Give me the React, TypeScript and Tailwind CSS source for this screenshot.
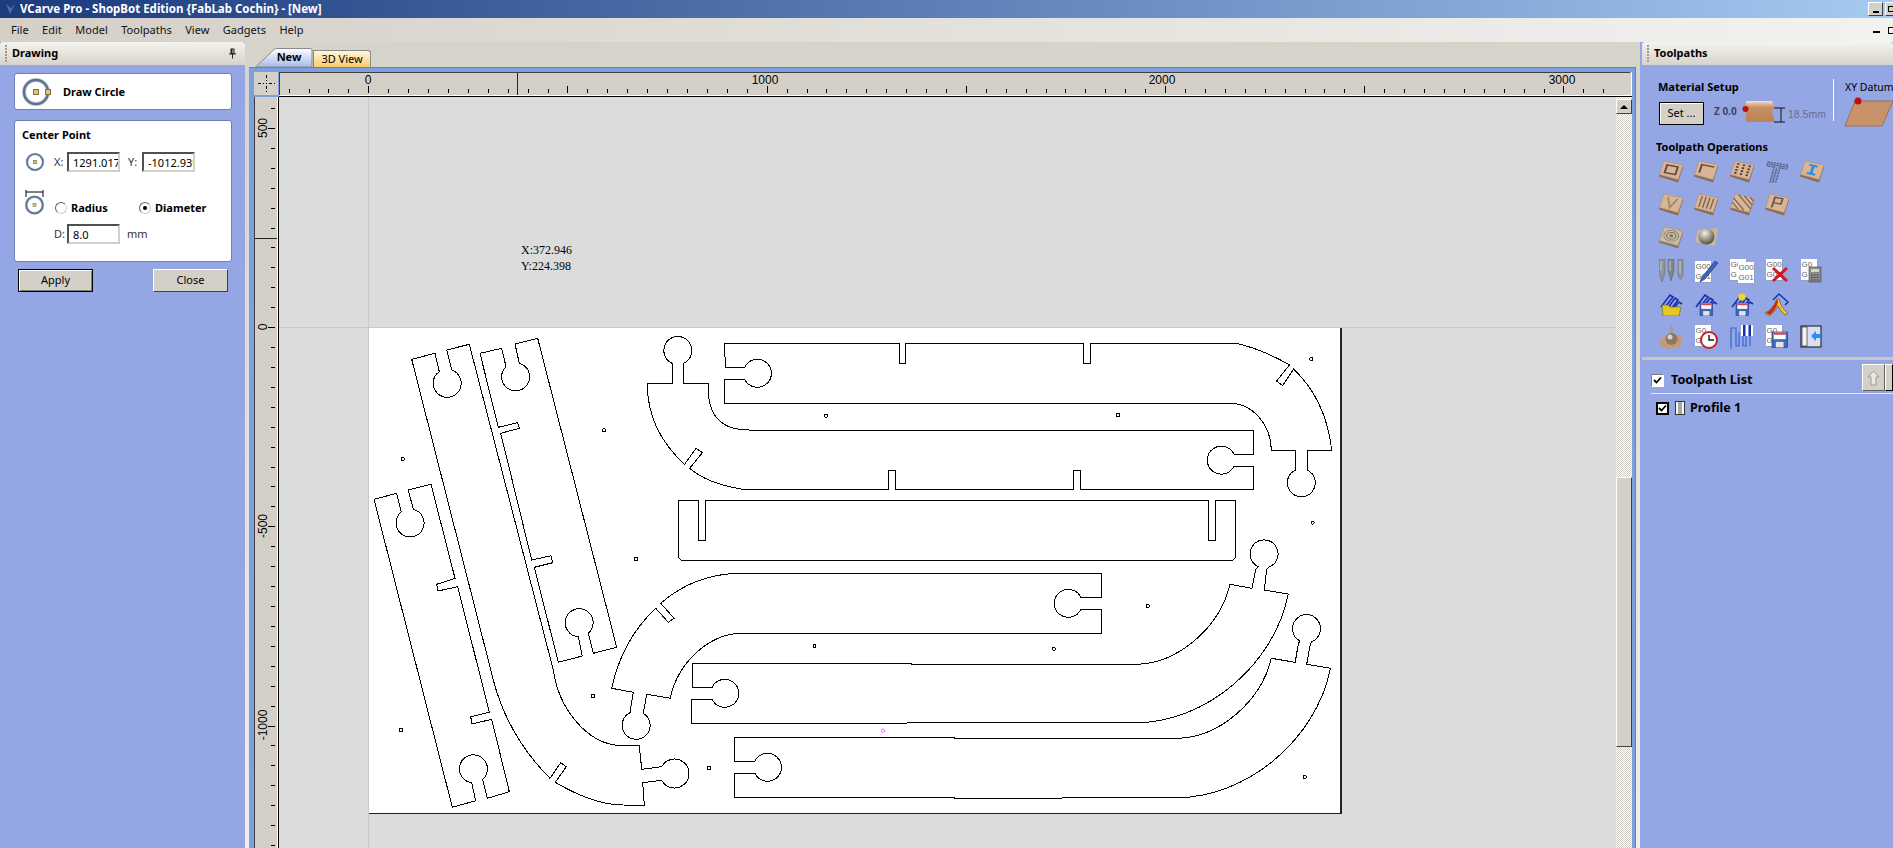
import type { ReactNode } from 'react';

const menus = ['File', 'Edit', 'Model', 'Toolpaths', 'View', 'Gadgets', 'Help'];

// sheet outlines, in screen pixels
const parts = [
  // long strap with the curved end
  'M411.7 359.3L435 353.3L439.3 371.7A14 14 0 1 0 451.7 370L446.7 350L469.3 344.3L553.3 670C558 705 585 745.7 623.3 745.7L639.3 745.7L641.7 769.3L661.7 766.7A14.5 14.5 0 1 1 661.7 780.3L642.7 782.7L644.3 805.3L623.3 805Q593.8 805 555.3 782.3L566.3 766.7L560.7 762.7L550 778.3Q507.8 736 493.3 680L411.7 359.3Z',
  // middle strap
  'M480 353.3L501.7 348.3L506 366.7A14 14 0 1 0 519.3 363.3L515 344L537.7 338.3L616.7 647.3L593.3 653.3L588.3 633.3A14 14 0 1 0 578.3 636.7L582.3 656L558.3 662.3L534.3 567.3L552.7 562.7L551 555.7L531.7 560L500.7 433.3L519.3 428.3L517.7 422.7L498.3 427.3Z',
  // short strap
  'M374 499.3L396.7 493.3L401.3 512A14 14 0 1 0 413.3 509.3L408.3 490L431 484.3L455 578.3L436.7 584.3L438 591L457.7 586.7L489.3 712.3L470.7 716.7L472 724L491.7 719.3L509.3 791.7L487.3 798.3L482.7 779.3A14 14 0 1 0 471.7 782.7L475.7 800.7L452.3 807.3Z',
  // top J
  'M724.5 343.3L899 343.3L899 363.3L905.4 363.3L905.4 343.3L1083.5 343.3L1083.5 363.3L1090.3 363.3L1090.3 343.3L1236 343.3Q1262 349 1289.5 365L1276.6 381L1282.6 385.7L1293.6 369Q1326 400 1331.7 450L1307 450L1307 470A14 14 0 1 1 1295.6 470L1295.6 450L1271.3 450C1271 424.6 1252.5 403.3 1230 403.3L724.5 403.3L724.5 379.3L744.7 379.3A14 14 0 1 0 744.7 367.3L725.4 367.3Z',
  // second J
  'M647.3 383.3L672.1 383.3L672.1 363.3A14 14 0 1 1 683.6 363.3L683.6 383.3L708 383.3L708.9 398.3Q713 430 748.6 430L1253.9 430L1253.9 454.3L1234 454.3A14 14 0 1 0 1234 466L1253.9 466L1253.9 489.3L1080.6 489.3L1080.6 470.3L1073.6 470.3L1073.6 489.3L895.3 489.3L895.3 470.3L888.5 470.3L888.5 489.3L743 489.3Q708 484 689.6 468.3L702.4 452.7L696 448.3L684.6 464.3Q647 430 647.3 383.3Z',
  // plain bar with two slots
  'M678.6 500.3L698.3 500.3L698.3 540.3L705.7 540.3L705.7 500.3L1208.4 500.3L1208.4 540.3L1215.3 540.3L1215.3 500.3L1235.5 500.3L1235.5 557.7L1232.5 560.3L681.3 560.3L678.6 557.7Z',
  // lower J, first
  'M1101.4 573.3L1101.4 597.3L1080.9 597.3A14 14 0 1 0 1080.9 609.3L1101.4 609.3L1101.4 633.3L741.9 633.3C709.7 633.3 677.5 662.5 670.3 698.3L646.7 694.3L643.3 713.3A14 14 0 1 1 630 712.7L633.3 692.3L611.7 688.3Q622 640 655.7 608.3L668.3 622.3L674 618.3L660.7 603.3Q695 573.3 741.9 573.3Z',
  // lower J, second
  'M692.3 663.3L911.8 663.3L911.8 664.3L1135 664.3C1176.8 664.3 1219.6 628.3 1230 584.3L1252 588.3L1255.7 569.3L1258 566.500A14 14 0 1 1 1269 567L1266.7 569.3L1264.4 590L1288.3 594C1274.2 664.8 1205.6 722.7 1135.9 722.7L691.4 723.3L691.4 699.3L712.1 699.3A14 14 0 1 0 712.1 687.3L692.3 687.3Z',
  // lower J, third
  'M734.6 737.3L954.5 737.3L954.5 738.3L1176.3 738.3C1217.9 738.3 1260.8 702.3 1271.3 658.3L1295.2 662.3L1298.4 643.3L1300 641A14 14 0 1 1 1312 641.500L1310.3 644L1306.7 664.3L1330.5 668.3C1316.3 739.5 1246.9 797.7 1176.3 797.7L954.5 798.3L954.5 797.3L734.6 797.3L734.6 773.3L754.8 773.3A14 14 0 1 0 754.8 761.3L734.6 761.3Z',
];

const holes = [
  [402.7, 459], [604, 430.3], [636, 559], [401, 730], [593, 696], [709, 768], [826, 415.7], [1118, 415],
  [1311.2, 359], [1312.6, 522.7], [1147.8, 606], [814.5, 646], [1053.7, 648.7], [1304.8, 777],
];

function Grip() {
  return (
    <div className="flex flex-col gap-[1px] mr-[5px]">
      {[0, 1, 2, 3, 4, 5].map((i) => (
        <span key={i} className="w-[2px] h-[2px] bg-[#a09c92]" />
      ))}
    </div>
  );
}

function PanelHeader({ title, children }: { title: string; children?: ReactNode }) {
  return (
    <div className="h-[23px] shrink-0 flex items-center pl-[5px] pr-[8px] rounded-t-[3px] bg-gradient-to-b from-[#f4f3ef] to-[#d6d3ca]">
      <Grip />
      <span className="font-bold text-[11px] text-black">{title}</span>
      <span className="flex-1" />
      {children}
    </div>
  );
}

function Field({ value }: { value: string }) {
  return (
    <input
      readOnly
      value={value}
      className="w-[53px] h-[20px] pl-[4px] text-[11px] text-black bg-white border-2 border-t-[#505050] border-l-[#505050] border-r-[#d4d0c8] border-b-[#d4d0c8] outline-none"
    />
  );
}

function Radio({ on }: { on?: boolean }) {
  return (
    <span className="w-[12px] h-[12px] rounded-full bg-white border border-t-[#606060] border-l-[#606060] border-r-[#d4d0c8] border-b-[#d4d0c8] flex items-center justify-center">
      {on && <span className="w-[4px] h-[4px] rounded-full bg-black" />}
    </span>
  );
}

function Ring({ size, right }: { size: number; right?: boolean }) {
  return (
    <svg width={size} height={size} viewBox="0 0 30 30" className="overflow-visible">
      <circle cx="15" cy="15" r="12" fill="none" stroke="#c4cbd8" strokeWidth="4" />
      <circle cx="15" cy="15" r="12" fill="none" stroke="#5b7096" strokeWidth="2.4" />
      <rect x="12.5" y="12.5" width="5" height="5" fill="#d9c48c" stroke="#84723c" />
      {right && <rect x="24.5" y="12.5" width="5" height="5" fill="#d9c48c" stroke="#84723c" />}
    </svg>
  );
}

function RingSpan() {
  return (
    <svg width="20" height="26" viewBox="0 0 20 26">
      <path d="M1 1V8M18 1V8M1 3H18" fill="none" stroke="#000" />
      <circle cx="9.5" cy="16" r="8.3" fill="none" stroke="#c4cbd8" strokeWidth="3" />
      <circle cx="9.5" cy="16" r="8.3" fill="none" stroke="#5b7096" strokeWidth="1.8" />
      <rect x="8" y="14.5" width="3" height="3" fill="#d9c48c" stroke="#84723c" strokeWidth="0.6" />
    </svg>
  );
}

function DrawingPanel() {
  return (
    <div className="w-[245px] shrink-0 flex flex-col bg-[#94a6e4]">
      <PanelHeader title="Drawing">
        <svg width="9" height="11" viewBox="0 0 9 11">
          <path d="M2.5 .5H6.5V5.5H8V6.5H5V10.5H4V6.5H1V5.5H2.5Z" fill="#222" />
          <path d="M5 1.5V5" stroke="#ddd" />
        </svg>
      </PanelHeader>
      <div className="pl-[14px] pt-[8px] w-[232px]">
        <div className="h-[37px] bg-white rounded-[3px] border border-[#6f7fb0] flex items-center pl-[6px]">
          <Ring size={30} right />
          <span className="ml-[12px] pt-[2px] font-bold text-[11px] text-black">Draw Circle</span>
        </div>
        <div className="mt-[10px] h-[142px] bg-white rounded-[3px] border border-[#6f7fb0] pl-[7px] pt-[6px] text-[11px] text-black">
          <div className="h-[16px] leading-[16px] font-bold">Center Point</div>
          <div className="mt-[9px] h-[20px] flex items-center">
            <span className="ml-[3px] mr-[1px] w-[21px]"><Ring size={20} /></span>
            <span className="ml-[7px] w-[13px] text-[#333]">X:</span>
            <Field value="1291.017" />
            <span className="ml-[8px] w-[14px] text-[#333]">Y:</span>
            <Field value="-1012.939" />
          </div>
          <div className="mt-[17px] h-[26px] flex items-center">
            <span className="ml-[3px] w-[20px] flex"><RingSpan /></span>
            <span className="ml-[10px] mt-[12px] flex items-center gap-[4px] w-[90px] font-bold">
              <Radio />
              Radius
            </span>
            <span className="mt-[12px] flex items-center gap-[4px] -ml-[6px] font-bold">
              <Radio on />
              Diameter
            </span>
          </div>
          <div className="mt-[9px] h-[20px] flex items-center">
            <span className="ml-[32px] w-[13px] text-[#333]">D:</span>
            <Field value="8.0" />
            <span className="ml-[7px] text-[#333]">mm</span>
          </div>
        </div>
        <div className="mt-[7px] flex justify-between pl-[4px] pr-[4px]">
          <button className="w-[75px] h-[23px] text-[11px] text-black bg-[#d4d0c8] border border-black shadow-[inset_1px_1px_0_#fff,inset_-1px_-1px_0_#808080]">
            Apply
          </button>
          <button className="w-[75px] h-[23px] text-[11px] text-black bg-[#d4d0c8] border border-t-white border-l-white border-r-[#404040] border-b-[#404040]">
            Close
          </button>
        </div>
      </div>
    </div>
  );
}

function TopRuler() {
  const ticks = Array.from({ length: 67 }, (_, i) => 288.6 + i * 19.92);
  return (
    <svg width="1353" height="25" viewBox="279 72 1353 25" className="block">
      <rect x="279" y="72" width="1353" height="25" fill="#d4d0c8" />
      <rect x="279" y="72" width="1351" height="1" fill="#404040" />
      <rect x="279" y="72" width="1" height="23" fill="#404040" />
      <rect x="279" y="95" width="1353" height="1" fill="#fff" />
      <rect x="279" y="96" width="1353" height="1" fill="#000" />
      <rect x="1631" y="73" width="1" height="22" fill="#fff" />
      {ticks.filter((x) => x < 1610).map((x, i) => (
        <rect key={x} x={Math.round(x)} y={(i - 4) % 10 === 0 ? 86 : 89} width="1" height={(i - 4) % 10 === 0 ? 7 : 4} fill="#000" />
      ))}
      <rect x="517" y="73" width="1" height="22" fill="#222" />
      {[['0', 368], ['1000', 765], ['2000', 1162], ['3000', 1562]].map(([t, x]) => (
        <text key={t} x={x} y="84" textAnchor="middle" fontSize="12" fontFamily="Liberation Sans" fill="#000">
          {t}
        </text>
      ))}
    </svg>
  );
}

function LeftRuler() {
  const ticks = Array.from({ length: 38 }, (_, i) => 108 + i * 19.92);
  return (
    <svg width="26" height="751" viewBox="253 97 26 751" className="block shrink-0">
      <rect x="254" y="97" width="1" height="751" fill="#404040" />
      <rect x="255" y="97" width="22" height="751" fill="#d4d0c8" />
      <rect x="277" y="97" width="1" height="751" fill="#fff" />
      <rect x="278" y="97" width="1" height="751" fill="#000" />
      {ticks.map((y, i) => (
        <rect key={y} x={(i - 1) % 10 === 0 ? 268 : 271} y={Math.round(y)} width={(i - 1) % 10 === 0 ? 7 : 4} height="1" fill="#000" />
      ))}
      <rect x="255" y="238" width="22" height="1" fill="#222" />
      {[['500', 128], ['0', 327], ['-500', 526], ['-1000', 725]].map(([t, y]) => (
        <text key={t} x="0" y="0" transform={`translate(267 ${y}) rotate(-90)`} textAnchor="middle" fontSize="12" fontFamily="Liberation Sans" fill="#000">
          {t}
        </text>
      ))}
    </svg>
  );
}

function Canvas() {
  return (
    <div className="flex-1 relative bg-[#dcdcdc] overflow-hidden">
      <svg width="1337" height="751" viewBox="279 97 1337 751" className="block">
        <rect x="368" y="97" width="1" height="751" fill="#c8c8c8" />
        <rect x="279" y="327" width="1337" height="1" fill="#c8c8c8" />
        <rect x="369" y="328" width="973" height="486" fill="#222" />
        <rect x="369" y="328" width="971" height="485" fill="#fff" />
        <g fill="none" stroke="#000" strokeWidth="1" shapeRendering="crispEdges">
          {parts.map((d) => (
            <path key={d} d={d} />
          ))}
          {holes.map(([x, y]) => (
            <circle key={x} cx={x} cy={y} r="1.6" />
          ))}
        </g>
        <circle cx="882.9" cy="730.7" r="1.6" fill="none" stroke="#f0f" strokeDasharray="1.5 1" />
      </svg>
      <div className="absolute left-[242px] top-[145px] font-['Liberation_Serif',serif] text-[12px] leading-[16px] text-black">
        <div>X:372.946</div>
        <div>Y:224.398</div>
      </div>
    </div>
  );
}

function ScrollBar() {
  return (
    <div className="w-[16px] shrink-0 pt-[2px] flex flex-col bg-[repeating-conic-gradient(#d4d0c8_0%_25%,#ffffff_0%_50%)] bg-[length:2px_2px]">
      <div className="h-[15px] bg-[#d4d0c8] border border-t-white border-l-white border-r-[#404040] border-b-[#404040] flex items-center justify-center">
        <span className="w-0 h-0 border-x-[4px] border-x-transparent border-b-[4px] border-b-black" />
      </div>
      <div className="mt-[363px] h-[270px] bg-[#d4d0c8] border border-t-white border-l-white border-r-[#404040] border-b-[#404040]" />
    </div>
  );
}

function CenterArea() {
  return (
    <div className="w-[1395px] shrink-0 flex flex-col px-[4px] bg-gradient-to-b from-[#d6d3ca] to-[#f0efeb]">
      <div className="h-[25px] shrink-0 flex items-end pl-[6px]">
        <div className="relative w-[58px] h-[19px] flex items-center justify-center pl-[10px]">
          <svg width="58" height="19" viewBox="0 0 58 19" className="absolute inset-0">
            <defs>
              <linearGradient id="newTab" x1="0" y1="0" x2="0" y2="1">
                <stop offset="0" stopColor="#ffffff" />
                <stop offset="1" stopColor="#a3bbea" />
              </linearGradient>
            </defs>
            <path d="M.5 19L19 1.5Q20 .5 22 .5H55Q57 .5 57 2.5V19Z" fill="url(#newTab)" stroke="#8a8a8a" />
          </svg>
          <span className="relative font-bold text-[11px] text-black">New</span>
        </div>
        <div className="w-[58px] h-[17px] flex items-center justify-center rounded-tr-[3px] border border-b-0 border-[#8a8a8a] bg-gradient-to-b from-[#fff7dc] to-[#f8cb66] text-[11px] text-black">
          3D View
        </div>
      </div>
      <div className="flex-1 min-h-0 flex flex-col pl-[4px] pr-[3px] pt-[4px] bg-[#7d9fe0] border-t border-r border-[#808080]">
        <div className="h-[25px] shrink-0 flex">
          <div className="w-[24px] h-[23px] ml-[1px] mr-[1px] bg-[#d4d0c8] flex items-center justify-center">
            <svg width="17" height="17" viewBox="0 0 17 17">
              <path d="M8.5 0V6M8.5 8V9M8.5 11V17M0 8.5H6M11 8.5H17" stroke="#000" strokeDasharray="3 2" />
            </svg>
          </div>
          <TopRuler />
        </div>
        <div className="flex-1 min-h-0 flex">
          <LeftRuler />
          <Canvas />
          <ScrollBar />
        </div>
      </div>
    </div>
  );
}

function Tile({ children, face = '#d9b596', side = '#8c6d50' }: { children?: ReactNode; face?: string; side?: string }) {
  return (
    <svg width="25" height="23" viewBox="0 0 25 23">
      <path d="M.5 14.5L19 19.5L24 5V7.5L19 22.5L0 16.5Z" fill={side} />
      <path d="M5 1L24 5L19 19.5L.5 14.5Z" fill={face} stroke="#b08f70" strokeWidth=".6" />
      <g transform="matrix(1.9 .4 -.45 1.35 5 1)" fill="none">{children}</g>
    </svg>
  );
}

function Doc({ x = 1, y = 1, short }: { x?: number; y?: number; short?: boolean }) {
  return (
    <g transform={`translate(${x} ${y})`}>
      <rect x="1" y="1" width="16" height="21" fill="#8da0c4" />
      <rect width="16" height="21" fill="#fff" />
      <text x="0.5" y="8" fontSize="8" fontFamily="Liberation Sans" fill="#666">{short ? 'G0' : 'G00'}</text>
      <text x="0.5" y="18" fontSize="8" fontFamily="Liberation Sans" fill="#666">{short ? 'G' : 'G01'}</text>
    </g>
  );
}

function Floppy({ x, y, s = 1 }: { x: number; y: number; s?: number }) {
  return (
    <g transform={`translate(${x} ${y}) scale(${s})`}>
      <rect width="14" height="14" fill="#3f6ab8" stroke="#1c3a80" strokeWidth=".6" />
      <rect x="1.5" y="0.5" width="11" height="6" fill="#fff" />
      <rect x="1.5" y="0.5" width="11" height="2" fill="#d9434e" />
      <rect x="3.5" y="9" width="7" height="5" fill="#e4e4e4" />
    </g>
  );
}

function Zig() {
  return <path d="M2 15L11 3L14 5L7 14M9 16L16 6L19 8L13 16M14 17L20 10L23 12" fill="none" stroke="#1a2fb0" strokeWidth="1.6" />;
}

const Ico = ({ children }: { children: ReactNode }) => (
  <svg width="25" height="24" viewBox="0 0 25 24">
    {children}
  </svg>
);

const opIcons: ReactNode[] = [
  <Tile><rect x="2.2" y="2.2" width="5.6" height="5.6" stroke="#5e4c3c" strokeWidth="1" /></Tile>,
  <Tile><path d="M2 8V2H8.5" stroke="#5e4c3c" strokeWidth="1" /></Tile>,
  <Tile>
    {[2, 5, 8].map((x) => [1.5, 3.7, 5.9, 8.1].map((y) => <rect key={`${x}${y}`} x={x - .5} y={y - .5} width="1.2" height="1.2" fill="#4e3f34" />))}
  </Tile>,
  <Ico>
    <path d="M3 2L23 5L22 9L15 8L11 22L5 22L9 7L2 6Z" fill="#8a97c8" stroke="#4c5a86" strokeWidth="1.2" strokeDasharray="2 1" />
    <path d="M4 4L21 7M12 8L8 21" fill="none" stroke="#4c5a86" strokeWidth=".8" />
  </Ico>,
  <Tile><path d="M2.8 2H7.2M5 2V8M2.8 8H7.2" stroke="#1e90ec" strokeWidth="1.4" /></Tile>,
  <Tile><path d="M2.5 1.5L5 8.5L7.5 1.5" stroke="#a18a72" strokeWidth="1" /></Tile>,
  <Tile><path d="M2 1V9M4 1V9M6 1V9M8 1V9" stroke="#7a6450" strokeWidth=".7" /></Tile>,
  <Tile><path d="M0 3L7 10M0 6L4 10M2 0L10 8M5 0L10 5M8 0L10 2" stroke="#6e5a48" strokeWidth=".6" /></Tile>,
  <Tile><path d="M3 9V1.5H7V5.5H3" stroke="#6e5a48" strokeWidth="1" /></Tile>,
  null,
  <Tile face="#c9bda6" side="#847a68"><ellipse cx="5" cy="5" rx="3.8" ry="3.8" stroke="#8c7f6a" strokeWidth=".5" /><ellipse cx="5" cy="5" rx="2.4" ry="2.4" stroke="#7a6e5c" strokeWidth=".6" /><ellipse cx="5" cy="5" rx="1" ry="1" fill="#7a6e5c" /></Tile>,
  <Ico>
    <defs>
      <radialGradient id="ball" cx=".4" cy=".3" r=".7">
        <stop offset="0" stopColor="#f4f1ea" />
        <stop offset="1" stopColor="#5a5040" />
      </radialGradient>
    </defs>
    <path d="M4 4L24 2L21 20L1 16Z" fill="#c9b79c" />
    <circle cx="12.5" cy="10.5" r="8" fill="url(#ball)" />
  </Ico>,
  null,
  null,
  null,
  <Ico>
    <path d="M0 0H6V14L3 23L0 14Z" fill="#8e949e" stroke="#5c626c" strokeWidth=".5" />
    <path d="M9 0H15V12L12 22L9 12Z" fill="#7f858f" stroke="#5c626c" strokeWidth=".5" />
    <path d="M19 0H24V16Q21.500 24 19 16Z" fill="#8e949e" stroke="#5c626c" strokeWidth=".5" />
    <path d="M2 2V12M11 2V12M21 2V14" stroke="#d5d8de" strokeWidth=".8" />
  </Ico>,
  <Ico>
    <Doc x={1} y={2} />
    <path d="M8 18L21 2L24 4L11 20L6 23Z" fill="#3566c4" stroke="#15306e" strokeWidth=".6" />
  </Ico>,
  <Ico>
    <Doc x={0} y={0} short />
    <Doc x={8} y={3} />
  </Ico>,
  <Ico>
    <Doc x={1} y={0} />
    <path d="M8 9L22 22M22 9L8 22" stroke="#d8151c" strokeWidth="3" />
  </Ico>,
  <Ico>
    <Doc x={1} y={0} short />
    <rect x="9" y="8" width="12" height="15" fill="#8b8b8b" stroke="#444" strokeWidth=".6" />
    <rect x="11" y="10" width="8" height="3" fill="#cfd6c8" />
    <path d="M11 16H19M11 18.500H19M11 21H19" stroke="#333" strokeDasharray="1.500 1.400" />
  </Ico>,
  <Ico>
    <Zig />
    <path d="M3 13H9L11 15H22L20 24H4Z" fill="#e8c81c" stroke="#7c6a10" strokeWidth=".7" />
  </Ico>,
  <Ico>
    <Zig />
    <Floppy x={6} y={11} s={.9} />
  </Ico>,
  <Ico>
    <Zig />
    <Floppy x={6} y={11} s={.9} />
    <circle cx="12" cy="5" r="3.6" fill="#f4d820" />
  </Ico>,
  <Ico>
    <path d="M8 8L14 2L23 10L20 13" fill="none" stroke="#1a2fb0" strokeWidth="1.4" />
    <path d="M0 21Q8 17 12 7L14 7Q16 16 23 21L20 23Q15 19 13 14Q11 19 4 24Z" fill="#f2c61a" stroke="#333" strokeWidth=".5" />
    <path d="M1 21Q8 17 12 7L13 10Q11 18 5 23Z" fill="#c8251e" />
  </Ico>,
  null,
  <Ico>
    <path d="M0 16L10 8L22 11L22 21L10 24L0 20Z" fill="#c59a73" />
    <rect x="11" y="0" width="3" height="9" fill="#9aa0aa" />
    <circle cx="12.5" cy="14" r="6" fill="#8a7a66" />
    <circle cx="11" cy="12" r="2.500" fill="#d8d0c4" />
  </Ico>,
  <Ico>
    <Doc x={1} y={0} short />
    <circle cx="15" cy="15" r="8" fill="#fff" stroke="#c8202a" strokeWidth="2" />
    <path d="M15 10V15H20" fill="none" stroke="#111" strokeWidth="1.4" />
  </Ico>,
  <Ico>
    <path d="M1 24V3H6V21H9V7M13 21V3M13 21H16V9M20 21V9" fill="none" stroke="#3a66d8" strokeWidth="1.2" />
    <rect x="11" y="0" width="12" height="11" fill="#fff" />
    <rect x="13" y="0" width="2.500" height="11" fill="#1a2fb0" />
    <rect x="18.500" y="0" width="2.500" height="11" fill="#1a2fb0" />
  </Ico>,
  <Ico>
    <Doc x={1} y={0} short />
    <Floppy x={7} y={7} s={1.1} />
  </Ico>,
  <Ico>
    <rect x="1" y="1" width="20" height="21" fill="#d8def6" stroke="#111" />
    <rect x="2" y="2" width="5" height="19" fill="#f2f2f2" stroke="#111" strokeWidth=".6" />
    <path d="M11 11L16 6V9H21V13H16V16Z" fill="#2e8cf0" />
  </Ico>,
  null,
];

function Check({ boxed }: { boxed?: boolean }) {
  return (
    <span className={boxed ? 'w-[13px] h-[13px] flex items-center justify-center bg-white border-2 border-black' : 'w-[13px] h-[13px] flex items-center justify-center bg-white border border-t-[#808080] border-l-[#808080] border-r-white border-b-white'}>
      <svg width="9" height="9" viewBox="0 0 9 9">
        <path d="M1 4L3.500 6.500L8 1.500" fill="none" stroke="#000" strokeWidth="1.800" />
      </svg>
    </span>
  );
}

function ToolpathsPanel() {
  return (
    <div className="flex-1 min-w-0 flex flex-col pl-[1px] bg-[#94a6e4] border-l border-[#94a6e4]">
      <PanelHeader title="Toolpaths" />
      <div className="h-[292px] shrink-0 pl-[16px] pt-[14px] text-[11px] text-black">
        <div className="flex h-[44px]">
          <div className="w-[175px] shrink-0">
            <div className="font-bold leading-[16px]">Material Setup</div>
            <div className="mt-[6px] flex items-center h-[24px]">
              <button className="w-[45px] h-[23px] ml-[1px] bg-[#d4d0c8] border border-black shadow-[inset_1px_1px_0_#fff] text-[11px] text-black">
                Set ...
              </button>
              <span className="ml-[10px] w-[27px] mb-[4px] text-[10px] font-bold text-[#3c4468]">Z 0.0</span>
              <svg width="90" height="26" viewBox="0 0 90 26" className="shrink-0">
                <defs>
                  <linearGradient id="block" x1="0" y1="0" x2="0" y2="1">
                    <stop offset="0" stopColor="#f1e2d0" />
                    <stop offset=".3" stopColor="#c98f62" />
                    <stop offset="1" stopColor="#bd8258" />
                  </linearGradient>
                </defs>
                <path d="M5 1H31L33 6L31 12L34 22H5Z" fill="url(#block)" />
                <circle cx="4.500" cy="9" r="3" fill="#c00d14" />
                <path d="M33 8H44M33 22H44M40 8V22" fill="none" stroke="#111" />
                <text x="47" y="18" fontSize="10.500" fontFamily="Liberation Sans" fill="#6a6f88">18.5mm</text>
              </svg>
            </div>
          </div>
          <div className="w-[1px] h-[42px] shrink-0 bg-white" />
          <div className="ml-[11px] shrink-0">
            <div className="leading-[16px] text-[10.5px]">XY Datum</div>
            <svg width="50" height="30" viewBox="0 0 50 30" className="-ml-[1px] mt-[2px]">
              <path d="M1 29L11 4H49L38 29Z" fill="#c8936a" stroke="#9a7150" />
              <circle cx="14" cy="4" r="3.500" fill="#c00d14" />
            </svg>
          </div>
        </div>
        <div className="mt-[16px] -ml-[2px] font-bold leading-[16px]">Toolpath Operations</div>
        <div className="grid grid-cols-[repeat(5,35.3px)] auto-rows-[33px] items-center justify-items-center -ml-[4px]">
          {opIcons.map((icon, i) => (
            <div key={i}>{icon}</div>
          ))}
        </div>
      </div>
      <div className="h-[3px] shrink-0 bg-[#c8c8c0]" />
      <div className="h-[34px] shrink-0 flex items-end pb-[6px] pl-[0px] border-b-[1px] border-[#e8e8e8] ml-[9px]">
        <Check />
        <span className="ml-[7px] font-bold text-[12.7px] leading-[16px] text-black">Toolpath List</span>
        <span className="flex-1" />
        <div className="self-start mt-[4px] w-[23px] h-[27px] bg-[#d4d0c8] border border-t-white border-l-white border-r-[#606060] border-b-[#606060] flex items-center justify-center">
          <svg width="13" height="16" viewBox="0 0 13 16">
            <path d="M6.500 1L12 7H9V15H4V7H1Z" fill="#e8e6e0" stroke="#9c9a92" />
          </svg>
        </div>
        <div className="self-start mt-[4px] w-[8px] h-[27px] bg-[#d4d0c8] border border-t-white border-l-white" />
      </div>
      <div className="mt-[6px] flex items-center pl-[14px] h-[16px]">
        <Check boxed />
        <svg width="10" height="14" viewBox="0 0 10 14" className="ml-[6px]">
          <rect x=".5" y=".5" width="9" height="13" fill="#fff" stroke="#333" />
          <rect x="3" y="1" width="4" height="12" fill="#aaa" />
        </svg>
        <span className="ml-[5px] font-bold text-[12.500px] text-black">Profile 1</span>
      </div>
    </div>
  );
}

export default function App() {
  return (
    <div className="w-[1893px] h-[848px] overflow-hidden flex flex-col font-['Noto_Sans',sans-serif] bg-[#d4d0c8]">
      <div className="h-[18px] shrink-0 flex items-center pl-[5px] bg-gradient-to-r from-[#1c3a7e] to-[#a6caf0]">
        <svg width="11" height="12" viewBox="0 0 11 12">
          <path d="M1 1L5 11L10 1L6 5Z" fill="#4e6aa8" />
        </svg>
        <span className="ml-[4px] font-bold text-[11.5px] text-white">VCarve Pro - ShopBot Edition {'{'}FabLab Cochin{'}'} - [New]</span>
        <span className="flex-1" />
        <div className="w-[15px] h-[14px] bg-[#d4d0c8] border border-t-white border-l-white border-r-[#404040] border-b-[#404040] flex items-end justify-center pb-[2px]">
          <span className="w-[6px] h-[2px] bg-black" />
        </div>
        <div className="w-[15px] h-[14px] ml-[2px] -mr-[7px] bg-[#d4d0c8] border border-t-white border-l-white border-r-[#404040] border-b-[#404040] flex items-center pl-[2px]">
          <span className="w-[6px] h-[6px] border border-black" />
        </div>
      </div>
      <div className="h-[24px] shrink-0 flex items-center bg-gradient-to-r from-[#d4d0c8] to-[#f3f2ef] text-[11px] text-[#111]">
        <div className="flex items-center pl-[11px] gap-[13.5px]">
          {menus.map((m) => (
            <span key={m}>{m}</span>
          ))}
        </div>
        <span className="flex-1" />
        <span className="w-[7px] h-[2px] mt-[4px] bg-black" />
        <span className="w-[7px] h-[7px] ml-[8px] -mr-[2px] border border-black" />
      </div>
      <div className="flex-1 min-h-0 flex">
        <DrawingPanel />
        <CenterArea />
        <ToolpathsPanel />
      </div>
    </div>
  );
}
